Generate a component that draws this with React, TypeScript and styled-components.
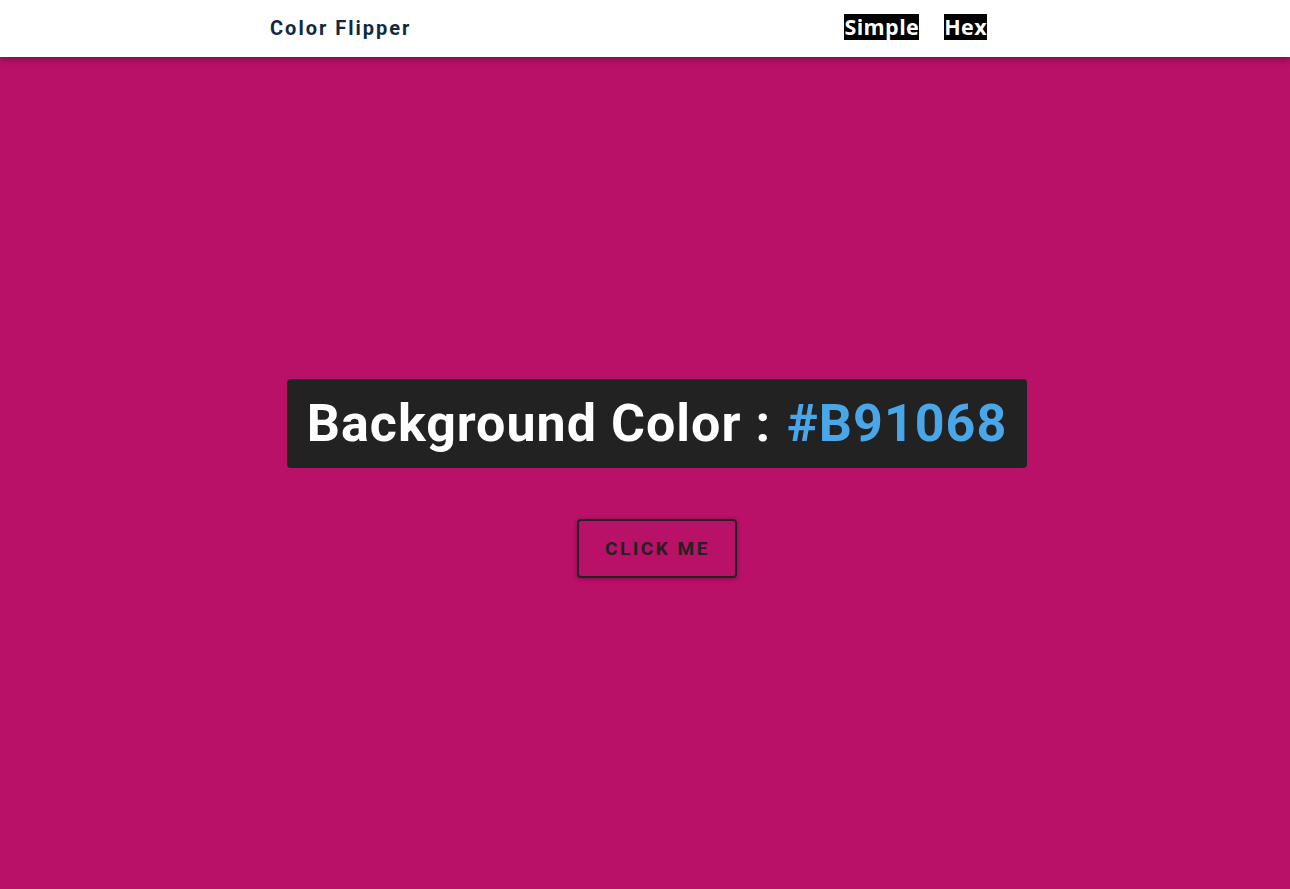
import React from "react";
import styled, { createGlobalStyle } from "styled-components";

const Global = createGlobalStyle`
  * { box-sizing: border-box; margin: 0; padding: 0; }
  html, body { height: 100%; }
  body { font-family: Roboto, "Open Sans", sans-serif; background: #b91068; }
  ul { list-style: none; }
  a { text-decoration: none; }
`;

const Nav = styled.nav`
  background: #fff;
  height: 57px;
  box-shadow: 0 3px 6px rgba(0, 0, 0, 0.25);
  position: relative;
  z-index: 1;
`;

const NavCenter = styled.div`
  width: 750px;
  margin: 0 auto;
  height: 100%;
  display: flex;
  align-items: center;
  justify-content: space-between;
  padding-bottom: 3px;
`;

const Logo = styled.h4`
  font-family: Roboto, sans-serif;
  font-weight: 700;
  font-size: 20px;
  letter-spacing: 2px;
  color: #102a42;
  padding-top: 1px;
`;

const Links = styled.ul`
  display: flex;
  gap: 25px;
  margin-right: 33px;
`;

const LinkItem = styled.a`
  display: block;
  background: #000;
  color: #fff;
  font-family: "Open Sans", sans-serif;
  font-weight: 700;
  font-size: 21.5px;
  line-height: 26px;
  letter-spacing: 0.4px;
`;

const Main = styled.main`
  min-height: calc(100vh - 57px);
  display: flex;
  flex-direction: column;
  align-items: center;
  justify-content: center;
  padding-top: 11px;
  padding-left: 24px;
`;

const Title = styled.h2`
  background: #222;
  color: #fff;
  border-radius: 4px;
  padding: 0 20px;
  height: 89px;
  display: flex;
  align-items: center;
  font-family: Roboto, sans-serif;
  font-weight: 700;
  font-size: 52px;
  letter-spacing: 1px;
  margin-bottom: 51px;
`;

const Hex = styled.span`
  color: #49a6e9;
  margin-left: 16px;
`;

const Button = styled.button`
  background: transparent;
  border: 2px solid #222;
  border-radius: 4px;
  color: #222;
  font-family: Roboto, sans-serif;
  font-weight: 700;
  font-size: 19px;
  letter-spacing: 2.5px;
  text-transform: uppercase;
  width: 160px;
  height: 59px;
  padding-left: 1px;
  box-shadow: 0 1px 4px rgba(0, 0, 0, 0.3);
  cursor: pointer;
`;

export default function App() {
  return (
    <>
      <Global />
      <Nav>
        <NavCenter>
          <Logo>Color Flipper</Logo>
          <Links>
            <li><LinkItem href="#">Simple</LinkItem></li>
            <li><LinkItem href="#">Hex</LinkItem></li>
          </Links>
        </NavCenter>
      </Nav>
      <Main>
        <Title>
          Background Color :<Hex>#B91068</Hex>
        </Title>
        <Button>click me</Button>
      </Main>
    </>
  );
}
